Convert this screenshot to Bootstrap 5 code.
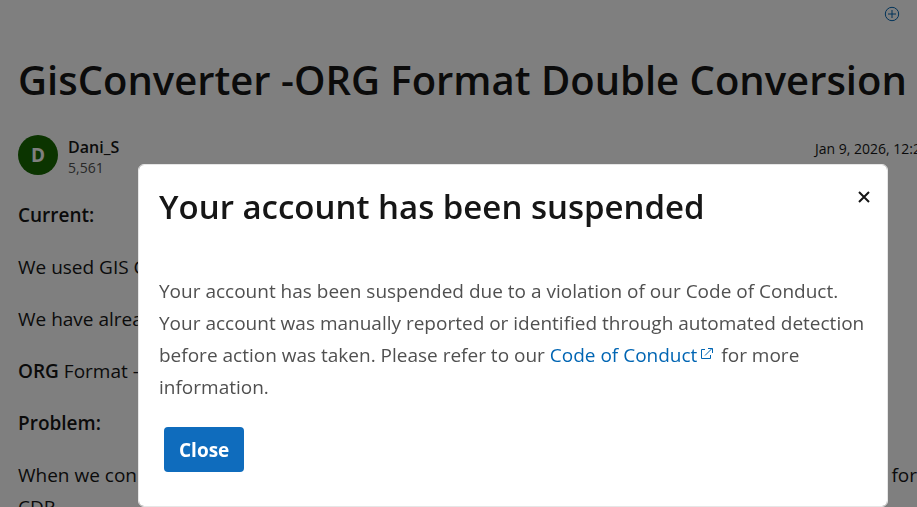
<!DOCTYPE html>
<html lang="en">
<head>
<meta charset="utf-8">
<meta name="viewport" content="width=device-width, initial-scale=1">
<title>GisConverter -ORG Format Double Conversion</title>
<link href="https://cdn.jsdelivr.net/npm/bootstrap@5.3.0/dist/css/bootstrap.min.css" rel="stylesheet">
<style>
  body { font-family: "Open Sans", "Noto Sans", sans-serif; font-size: 19px; line-height: 32px; color: #161616; height: 100vh; overflow: hidden; }
  .thread { padding: 0 0 0 18px; }
  .toolbar-row { height: 28px; padding-right: 17px; }
  .add-link { color: #0065b3; }
  .add-link svg, .outbound svg { display: block; }
  .thread-title { font-size: 40px; line-height: 56px; font-weight: 600; margin: 24px 0 27px; }
  .avatar { width: 40px; height: 40px; background: #166800; color: #fff; font-weight: 700; }
  .author-box { margin-left: 10px; }
  .author { font-size: 16px; line-height: 24px; font-weight: 600; }
  .points { font-size: 14px; line-height: 18px; color: #505050; }
  .posted { font-size: 14px; line-height: 28px; width: 102px; }
  .post { padding-top: 22px; }
  .post p { margin-bottom: 20px; }
  .post strong { font-weight: 600; }
  .notice { padding: 164px 29px 0 138px; }
  .notice .modal-dialog { max-width: none; margin: 0; }
  .notice .modal-content { border: 1px solid #e6e6e6; border-radius: 6px; padding: 20px; }
  .notice-title { font-size: 33px; line-height: 44px; font-weight: 600; }
  .dismiss { width: 24px; height: 24px; color: #161616; margin-right: -9px; }
  .notice-text { color: #505050; margin: 46px 0 24px; }
  .notice-text a { color: #0065b3; }
  .outbound { display: inline-block; margin: 0 3px; }
  .close-btn { background: #0f6cbd; color: #fff; font-size: 19px; line-height: 32px; font-weight: 700; border: 0; border-radius: 4px; padding: 7px 15px 6px; margin: 0 0 14px 5px; }
  .modal-backdrop { --bs-backdrop-opacity: .5; }
</style>
</head>
<body class="bg-white">
<main class="thread">
  <div class="toolbar-row d-flex justify-content-end align-items-center">
    <a href="#" class="add-link" aria-label="Add">
      <svg width="16" height="16" viewBox="0 0 16 16" fill="none" stroke="currentColor"><circle cx="8" cy="8" r="6.700"/><path d="M8 4v8M4 8h8"/></svg>
    </a>
  </div>
  <h1 class="thread-title text-nowrap">GisConverter -ORG Format Double Conversion</h1>
  <div class="d-flex align-items-start">
    <div class="avatar rounded-circle d-flex align-items-center justify-content-center flex-shrink-0">D</div>
    <div class="author-box flex-grow-1">
      <div class="author">Dani_S</div>
      <div class="points">5,561</div>
    </div>
    <time class="posted text-nowrap">Jan 9, 2026, 12:29</time>
  </div>
  <article class="post">
    <p><strong>Current:</strong></p>
    <p>We used GIS C</p>
    <p>We have alread</p>
    <p><strong>ORG</strong> Format -</p>
    <p><strong>Problem:</strong></p>
    <p><span class="d-flex justify-content-between"><span>When we con</span><span>for</span></span>CDR</p>
  </article>
</main>

<div class="modal-backdrop show"></div>
<div class="modal d-block notice overflow-hidden" role="dialog" aria-modal="true" aria-labelledby="notice-title">
  <div class="modal-dialog">
    <div class="modal-content">
      <div class="d-flex justify-content-between align-items-start">
        <h2 class="notice-title mb-0" id="notice-title">Your account has been suspended</h2>
        <button type="button" class="dismiss btn p-0 border-0 d-flex align-items-center justify-content-center" aria-label="Dismiss">
          <svg width="12" height="12" viewBox="0 0 12 12" fill="none" stroke="currentColor" stroke-width="2"><path d="M1 1l10 10M11 1L1 11"/></svg>
        </button>
      </div>
      <p class="notice-text">Your account has been suspended due to a violation of our Code of Conduct. Your account was manually reported or identified through automated detection before action was taken. Please refer to our <a href="#" class="text-decoration-none">Code of Conduct<span class="outbound"><svg width="13" height="15" viewBox="0 0 13 15" fill="none" stroke="currentColor"><path d="M5 2.500H1.500v9h9V8M5 8.500L12 1.500M8 1.500h4.500V6"/></svg></span></a> for more information.</p>
      <div><button type="button" class="btn close-btn">Close</button></div>
    </div>
  </div>
</div>
<script src="https://cdn.jsdelivr.net/npm/bootstrap@5.3.0/dist/js/bootstrap.bundle.min.js"></script>
</body>
</html>
